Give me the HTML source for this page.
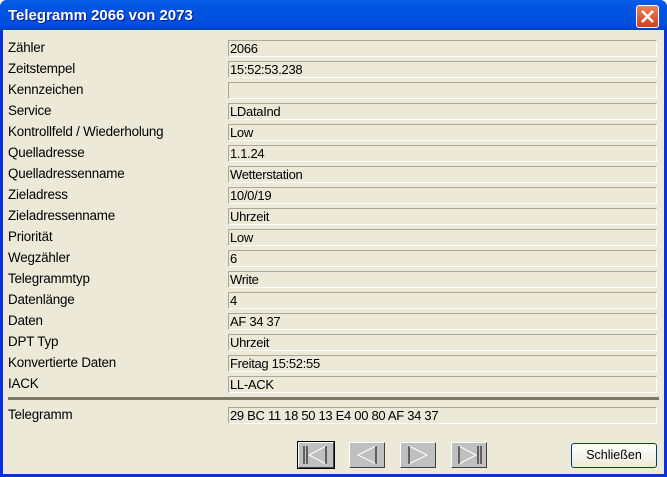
<!DOCTYPE html>
<html><head><style>
body{margin:0;width:667px;height:477px;overflow:hidden;font-family:"Liberation Sans",sans-serif;font-size:12px;}
.win{position:absolute;left:0;top:0;width:667px;height:477px;background:#0831d9;border-radius:7px 7px 0 0;}
.title{position:absolute;left:0;top:0;width:667px;height:30px;border-radius:7px 7px 0 0;background:linear-gradient(#0a5fe8,#0054e3 20%,#0050dc 80%,#0040c0);}
.title span{position:absolute;left:8px;top:7px;color:#fff;font-weight:bold;font-size:15px;text-shadow:1px 1px #0a1e8a;}
.close{position:absolute;left:636px;top:5px;width:21px;height:21px;border:1px solid #fff;border-radius:3px;background:linear-gradient(#e8805c,#d0401c);}
.body{position:absolute;left:3px;top:30px;width:661px;height:444px;background:#ece9d8;}
.lbl{position:absolute;left:5px;color:#000;font-size:13.4px;letter-spacing:-0.2px;}
.fld{position:absolute;left:225px;width:426px;height:15px;border:1px solid;border-color:#aca899 #fff #fff #aca899;font-size:13px;line-height:15px;padding-left:1px;letter-spacing:-0.3px;}
.sep{position:absolute;left:5px;top:367px;width:651px;height:3px;background:#7b7868;}
.nb{position:absolute;top:412px;width:36px;height:26px;background:#c0c0c0;border:1px solid;border-color:#fff #404040 #404040 #fff;box-sizing:border-box;}
.btn{position:absolute;left:568px;top:413px;width:86px;height:25px;border:1px solid #003c74;border-radius:3px;background:linear-gradient(#fff,#ece9d8);box-sizing:border-box;text-align:center;line-height:23px;font-size:12.5px;}
</style></head><body>
<div class="win">
<div class="title"><span>Telegramm 2066 von 2073</span>
<div class="close"><svg width="21" height="21"><path d="M5 5L16 16M16 5L5 16" stroke="#fff" stroke-width="2.5"/></svg></div></div>
<div class="body">
<div class="lbl" style="top:10px">Zähler</div><div class="fld" style="top:10px">2066</div>
<div class="lbl" style="top:31px">Zeitstempel</div><div class="fld" style="top:31px">15:52:53.238</div>
<div class="lbl" style="top:52px">Kennzeichen</div><div class="fld" style="top:52px"></div>
<div class="lbl" style="top:73px">Service</div><div class="fld" style="top:73px">LDataInd</div>
<div class="lbl" style="top:94px">Kontrollfeld / Wiederholung</div><div class="fld" style="top:94px">Low</div>
<div class="lbl" style="top:115px">Quelladresse</div><div class="fld" style="top:115px">1.1.24</div>
<div class="lbl" style="top:136px">Quelladressenname</div><div class="fld" style="top:136px">Wetterstation</div>
<div class="lbl" style="top:157px">Zieladress</div><div class="fld" style="top:157px">10/0/19</div>
<div class="lbl" style="top:178px">Zieladressenname</div><div class="fld" style="top:178px">Uhrzeit</div>
<div class="lbl" style="top:199px">Priorität</div><div class="fld" style="top:199px">Low</div>
<div class="lbl" style="top:220px">Wegzähler</div><div class="fld" style="top:220px">6</div>
<div class="lbl" style="top:241px">Telegrammtyp</div><div class="fld" style="top:241px">Write</div>
<div class="lbl" style="top:262px">Datenlänge</div><div class="fld" style="top:262px">4</div>
<div class="lbl" style="top:283px">Daten</div><div class="fld" style="top:283px">AF 34 37</div>
<div class="lbl" style="top:304px">DPT Typ</div><div class="fld" style="top:304px">Uhrzeit</div>
<div class="lbl" style="top:325px">Konvertierte Daten</div><div class="fld" style="top:325px">Freitag 15:52:55</div>
<div class="lbl" style="top:346px">IACK</div><div class="fld" style="top:346px">LL-ACK</div>
<div class="sep"></div>
<div class="lbl" style="top:377px">Telegramm</div><div class="fld" style="top:377px">29 BC 11 18 50 13 E4 00 80 AF 34 37</div>
<div class="nb" style="left:295px;outline:1px solid #000"><svg width="34" height="24"><path d="M5 3V21M8 3V21" stroke="#000"/><path d="M27 3L10 12L27 21Z" fill="none" stroke="#fff"/><path d="M27 3V21" stroke="#000"/></svg></div>
<div class="nb" style="left:346px"><svg width="34" height="24"><path d="M26 3L8 12L26 21Z" fill="none" stroke="#fff"/><path d="M26 3V21" stroke="#000"/></svg></div>
<div class="nb" style="left:397px"><svg width="34" height="24"><path d="M8 3L26 12L8 21Z" fill="none" stroke="#fff"/><path d="M8 3V21" stroke="#000"/></svg></div>
<div class="nb" style="left:448px"><svg width="34" height="24"><path d="M7 3L24 12L7 21Z" fill="none" stroke="#fff"/><path d="M7 3V21M26 3V21M29 3V21" stroke="#000"/></svg></div>
<div class="btn">Schließen</div>
</div></div>
</body></html>
